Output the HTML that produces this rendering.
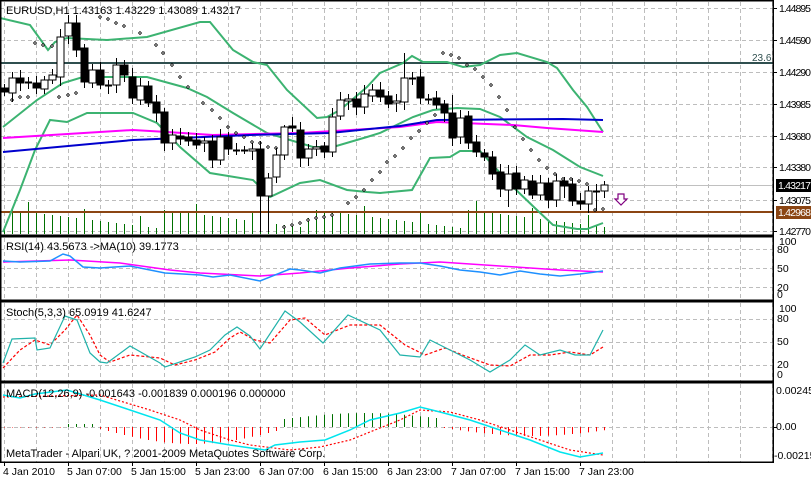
<!DOCTYPE html>
<html><head><meta charset="utf-8"><style>
html,body{margin:0;padding:0;background:#fff;width:811px;height:479px;overflow:hidden}
svg{display:block;font-family:"Liberation Sans",sans-serif;font-size:11px}
</style></head><body>
<svg id="s" width="811" height="479" viewBox="0 0 811 479" xmlns="http://www.w3.org/2000/svg">
<rect width="811" height="479" fill="#fff"/>
<g id="grid" stroke="#bdbdbd" stroke-dasharray="4,3" stroke-width="1"></g>
<g id="vol" stroke="#007000" stroke-width="1"></g>
<line x1="0" y1="185.5" x2="773" y2="185.5" stroke="#c0c0c0"/>
<line x1="0" y1="63" x2="773" y2="63" stroke="#2f4f4f" stroke-width="2"/>
<text x="752" y="61" fill="#2f4f4f" font-size="10">23.6</text>
<line x1="0" y1="212" x2="773" y2="212" stroke="#8b4513" stroke-width="2"/>
<g fill="none" stroke-width="2">
<polyline stroke="#3cb371" points="0,18 30,25 48,50 55,42 67,38 107,40 147,37 200,22 210,22 233,50 253,62 267,65 287,90 317,118 327,117 340,110 367,87 380,73 403,63 412,56 423,62 447,62 463,67 480,65 500,55 517,53 547,62 557,68 573,90 587,107 603,132"/>
<polyline stroke="#3cb371" points="3,127 37,100 63,83 83,77 147,77 187,88 207,97 233,113 267,133 290,140 313,147 333,147 367,137 380,133 413,117 433,110 457,108 480,109 500,117 527,137 553,150 580,167 603,176"/>
<polyline stroke="#3cb371" points="3,232 20,190 35,150 50,120 67,122 87,113 133,113 157,123 180,147 210,173 253,180 270,197 300,183 320,180 347,190 367,192 380,193 412,190 430,158 450,157 460,151 480,151 513,187 537,210 553,225 577,229 587,229 603,223"/>
<polyline stroke="#ff00ff" points="3,138 133,130 167,132 213,135 300,133 400,127 437,122 513,125 547,128 603,132"/>
<polyline stroke="#0000cd" points="3,152 133,140 250,135 330,133 400,126 437,120 563,119 603,120"/>
</g>
<g id="sar" fill="#fff" stroke="#000" stroke-width="0.8"></g>
<g id="candles"></g>
<path d="M618,194 h6 v5 h3 l-6,6 l-6,-6 h3z" fill="#fff" stroke="#800080" stroke-width="1.2"/>
<g fill="none" stroke-width="1.5">
<polyline stroke="#ff00ff" points="3,262 70,260 120,263 170,270 200,273 260,276 300,273 350,268 400,264 440,262 500,266 560,270 603,272"/>
<polyline stroke="#1e90ff" points="3,261 20,262 50,261 63,254 70,256 83,267 100,268 130,266 165,273 200,275 213,277 230,275 260,281 290,269 300,270 320,273 340,268 370,264 400,263 420,263 440,266 460,270 480,272 500,275 520,271 540,274 560,276 580,274 603,271"/>
</g>
<polyline fill="none" stroke="#ff0000" stroke-width="1.2" stroke-dasharray="3,2" points="3,368 20,350 35,340 50,345 65,330 77,315 90,335 100,355 110,362 130,355 160,358 175,365 195,360 215,352 230,338 240,332 255,340 270,343 290,320 305,318 325,335 350,325 380,325 405,345 425,355 445,348 465,356 490,365 510,366 530,355 550,355 570,352 590,355 603,347"/>
<polyline fill="none" stroke="#20b2aa" stroke-width="1.2" points="3,363 12,339 35,338 37,350 50,348 65,316 77,320 90,353 100,362 107,363 130,346 160,363 165,367 195,357 210,350 225,335 237,327 250,336 260,349 285,311 300,322 323,343 348,315 380,330 400,355 420,357 430,340 450,350 470,360 490,372 510,360 525,345 540,355 560,350 575,355 590,355 603,330"/>
<g id="hist" stroke-width="1"></g>
<polyline fill="none" stroke="#ff0000" stroke-width="1.2" stroke-dasharray="2,2" points="3,397 100,395 150,410 180,420 200,430 230,440 250,445 290,450 320,447 350,440 380,428 400,420 420,410 450,412 480,420 510,430 540,440 570,450 603,455"/>
<polyline fill="none" stroke="#00e5ee" stroke-width="1.5" points="3,395 20,398 35,394 67,390 100,400 130,410 160,420 180,433 200,440 230,445 265,450 275,445 300,442 325,440 350,430 370,420 400,413 420,407 440,412 470,420 500,430 530,440 560,452 580,457 603,453"/>
<g fill="none" stroke="#000" stroke-width="1.5">
<rect x="0.75" y="0.75" width="772.5" height="234.5"/>
<rect x="0.75" y="236.75" width="772.5" height="63.5"/>
<rect x="0.75" y="301.75" width="772.5" height="79.5"/>
<rect x="0.75" y="382.75" width="772.5" height="79.5"/>
</g>
<g fill="#000">
<text x="6" y="14">EURUSD,H1  1.43163 1.43229 1.43089 1.43217</text>
<text x="6" y="250">RSI(14) 43.5673  -&gt;MA(10) 39.1773</text>
<text x="6" y="316">Stoch(5,3,3) 65.0919 41.6247</text>
<text x="6" y="397">MACD(12,26,9) -0.001643 -0.001839 0.000196 0.000000</text>
<text x="6" y="457">MetaTrader - Alpari UK, ? 2001-2009 MetaQuotes Software Corp.</text>
</g>
<g id="ax" fill="#000" font-size="10.5"></g>
<rect x="776" y="179" width="35" height="13" fill="#000"/>
<text x="778" y="189" fill="#fff" font-size="10.5" textLength="33">1.43217</text>
<rect x="776" y="206" width="35" height="13" fill="#8b4513"/>
<text x="778" y="216" fill="#fff" font-size="10.5" textLength="33">1.42968</text>
</svg>
<script>
var NS="http://www.w3.org/2000/svg";
function el(p,t,a,txt){var e=document.createElementNS(NS,t);for(var k in a)e.setAttribute(k,a[k]);if(txt)e.textContent=txt;document.getElementById(p).appendChild(e);return e;}
var vx=[];for(var x=4;x<773;x+=32)vx.push(x);
[[2,235],[238,300],[303,381],[384,462]].forEach(function(r){vx.forEach(function(x){el('grid','line',{x1:x+.5,y1:r[0],x2:x+.5,y2:r[1]});});});
[8,40,72,104,136,167,200,231,249,268,287,319,342,365,427].forEach(function(y){el('grid','line',{x1:0,y1:y+.5,x2:773,y2:y+.5});});
var pl=[[1.44895,8],[1.44590,40],[1.44290,72],[1.43985,104],[1.43680,136],[1.43380,167],[1.43075,200],[1.42770,231]];
pl.forEach(function(p){el('ax','line',{x1:773,y1:p[1]+.5,x2:777,y2:p[1]+.5,stroke:'#000'});el('ax','text',{x:779,y:p[1]+4,textLength:32},p[0].toFixed(5));});
el('ax','text',{x:779,y:245},'100');el('ax','text',{x:777,y:253},'80');el('ax','text',{x:777,y:272},'50');el('ax','text',{x:777,y:291},'20');el('ax','text',{x:777,y:298},'0');
el('ax','text',{x:779,y:312},'100');el('ax','text',{x:777,y:322},'80');el('ax','text',{x:777,y:345},'50');el('ax','text',{x:777,y:368},'20');el('ax','text',{x:777,y:378},'0');
el('ax','text',{x:776,y:394},'0.00245');el('ax','text',{x:776,y:430},'0.00');el('ax','text',{x:774,y:459},'-0.00215');
el('ax','line',{x1:773,y1:427.5,x2:777,y2:427.5,stroke:'#000'});
var tl=["4 Jan 2010","5 Jan 07:00","5 Jan 15:00","5 Jan 23:00","6 Jan 07:00","6 Jan 15:00","6 Jan 23:00","7 Jan 07:00","7 Jan 15:00","7 Jan 23:00"];
tl.forEach(function(t,i){el('ax','line',{x1:4+64*i+.5,y1:462,x2:4+64*i+.5,y2:466,stroke:'#000'});el('ax','text',{x:3+64*i,y:475},t);});
var C=[[88,92],[93,78],[78,83],[82,82],[83,88],[89,80],[80,75],[77,37],[36,23],[23,50],[48,82],[83,70],[70,85],[85,85],[85,65],[65,75],[77,98],[100,86],[86,103],[102,113],[112,143],[143,135],[136,139],[137,141],[140,145],[143,141],[141,160],[160,137],[137,149],[150,150],[150,150],[151,149],[149,196],[196,178],[177,155],[155,127],[126,128],[130,158],[158,149],[149,147],[146,152],[152,117],[116,100],[101,99],[99,107],[107,94],[96,90],[90,97],[96,104],[103,101],[102,78],[78,78],[77,98],[99,99],[98,105],[104,113],[113,138],[137,118],[116,143],[142,152],[153,157],[157,174],[172,189],[190,174],[173,189],[189,180],[181,195],[195,183],[183,200],[200,181],[181,186],[184,201],[201,204],[204,191],[191,191],[191,185]];
var H={8:15,9:15,50:53,36:117,35:125,41:108,56:95,63:165,16:68,15:60,45:85};
var L={32:232,33:232,27:165,44:115,63:207,61:180,72:210,74:211,67:200,70:198};
for(var i=0;i<C.length;i++){
 var x=4+8*i,o=C[i][0],c=C[i][1],t=Math.min(o,c),b=Math.max(o,c);
 var hi=H[i]!==undefined?H[i]:t-4-(i*7%5),lo=L[i]!==undefined?L[i]:b+4+(i*5%6);
 el('candles','line',{x1:x+.5,y1:hi,x2:x+.5,y2:lo,stroke:'#000'});
 if(b-t<1){el('candles','line',{x1:x-3,y1:t+.5,x2:x+4,y2:t+.5,stroke:'#000','stroke-width':2});}
 else el('candles','rect',{x:x-3,y:t,width:7,height:b-t,fill:(c<o?'#fff':'#000'),stroke:'#000'});
 var vh=6+((i*37)%19)+(i%7==3?10:0);
 el('vol','line',{x1:x+.5,y1:234,x2:x+.5,y2:234-vh});
}
var S=[[12,100],[20,97],[28,97],[35,43],[43,45],[52,46],[59,97],[68,95],[76,93],[100,17],[108,19],[116,23],[124,26],[140,33],[156,45],[163,53],[172,65],[180,77],[188,87],[203,103],[212,110],[220,118],[228,127],[236,133],[244,137],[252,142],[260,143],[268,147],[276,148],[284,227],[292,225],[300,223],[308,220],[316,218],[324,217],[332,215],[348,203],[356,197],[364,190],[372,180],[380,172],[387,162],[395,156],[403,148],[411,138],[419,131],[427,123],[435,115],[443,53],[451,55],[459,58],[467,65],[475,69],[483,77],[491,85],[499,97],[507,110],[515,127],[523,139],[531,150],[539,160],[547,168],[555,174],[563,179],[571,179],[579,181],[587,184],[595,210],[603,209]];
S.forEach(function(p){el('sar','path',{d:'M'+p[0]+','+(p[1]-1.5)+'l1.5,1.5l-1.5,1.5l-1.5,-1.5z'});});
for(var i=0;i<C.length;i++){
 var x=4+8*i,v;
 if(i<8)v=-0.5;else if(i<12)v=3;else if(i<35)v=-(Math.sin((i-12)/23*Math.PI)*15+2);else if(i<55)v=8+Math.sin((i-35)/20*Math.PI)*6;else v=-(Math.sin((i-55)/22*Math.PI)*8+1);
 el('hist','line',{x1:x+.5,y1:427,x2:x+.5,y2:427-v,stroke:v>0?'#007000':'#ff0000'});
}
</script>
</body></html>
